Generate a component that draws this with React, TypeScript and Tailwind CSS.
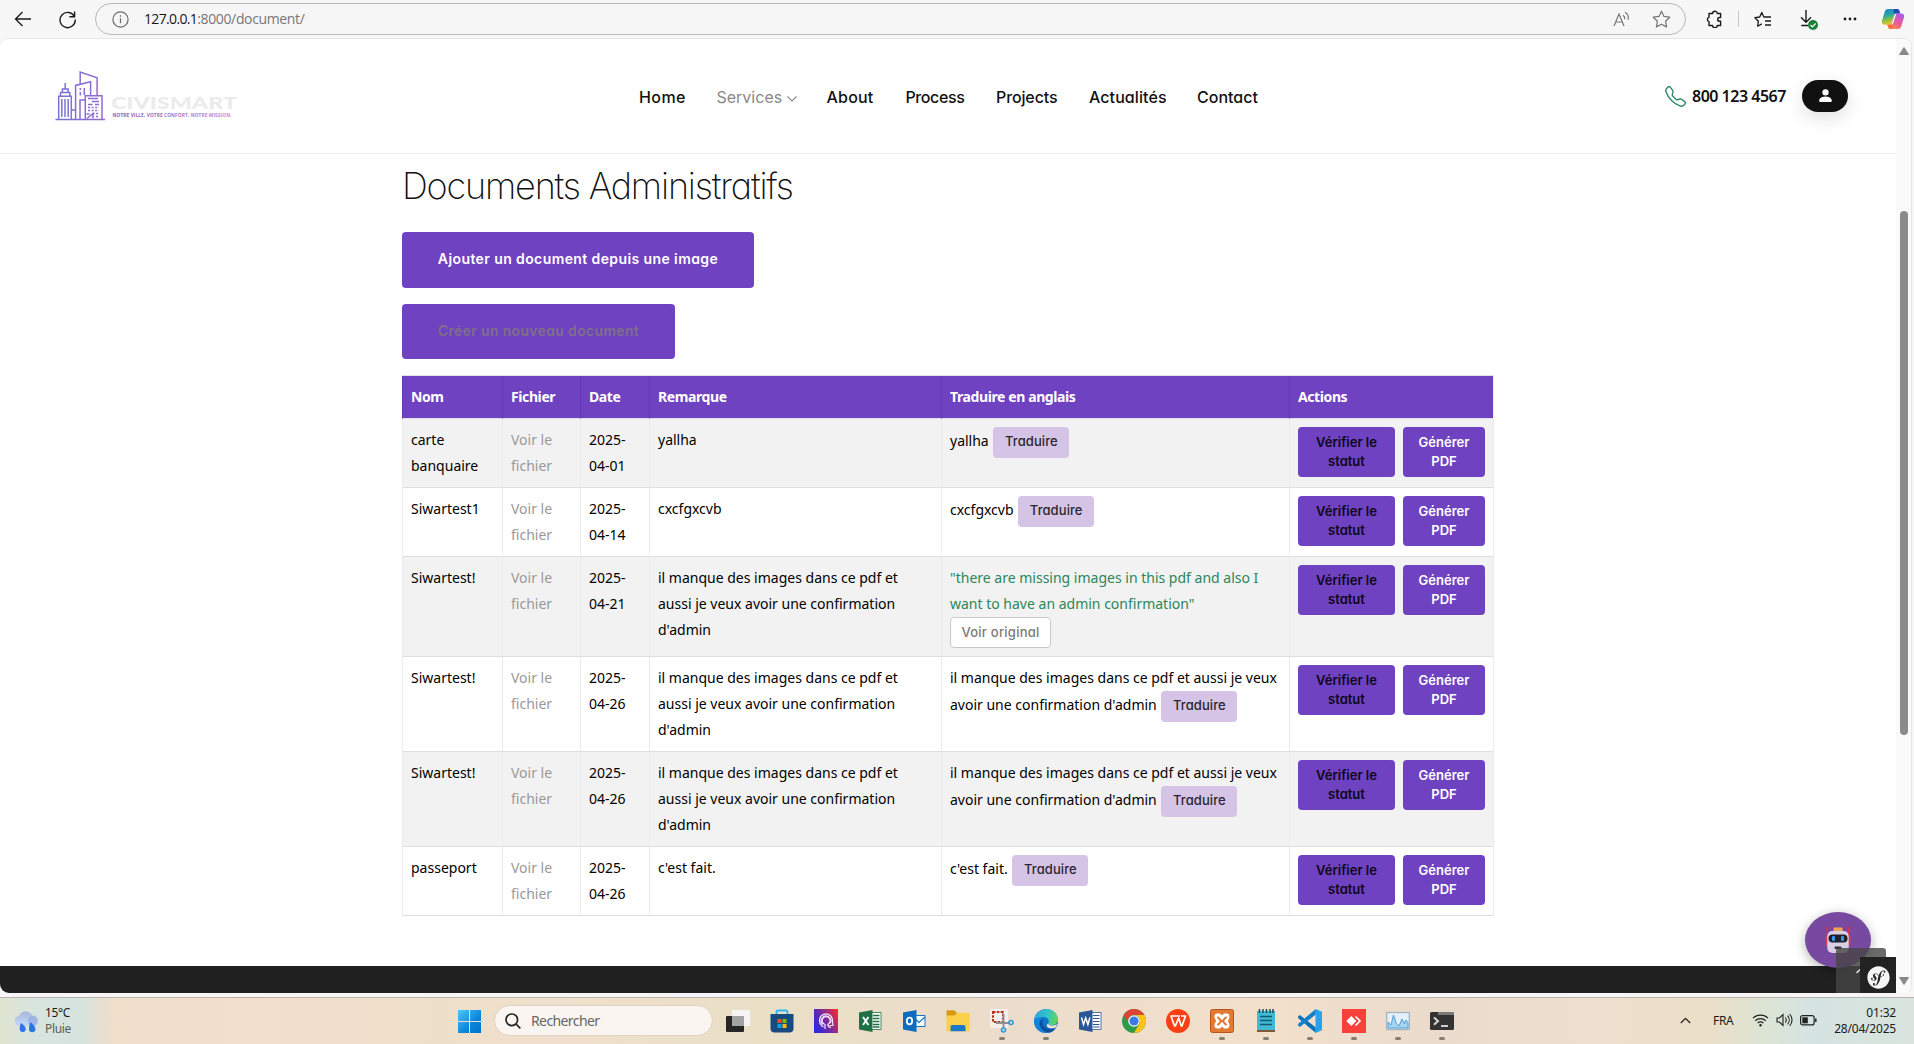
import React from "react";
import { BsPersonFill, BsTelephone } from "react-icons/bs";
import { FaSymfony } from "react-icons/fa";
import { SiXampp } from "react-icons/si";

/* ---------- browser toolbar ---------- */

function Copilot() {
  return (
    <svg width="24" height="22" viewBox="0 0 24 22">
      <defs>
        <linearGradient id="cpA" x1="0" y1="0" x2="0.3" y2="1">
          <stop offset="0" stopColor="#1b7fd8" />
          <stop offset=".45" stopColor="#2aa7a0" />
          <stop offset=".75" stopColor="#8fc23c" />
          <stop offset="1" stopColor="#f2c62a" />
        </linearGradient>
        <linearGradient id="cpB" x1="0.6" y1="0" x2="0.2" y2="1">
          <stop offset="0" stopColor="#b05ae0" />
          <stop offset=".5" stopColor="#e85a9c" />
          <stop offset="1" stopColor="#fb8a4e" />
        </linearGradient>
      </defs>
      <path d="M7 1h9c1.300 0 2 .7 2.400 2l.8 2.600h-3.600c-1.200 0-1.900.6-2.300 1.900L11 14.500c-.5 1.600-1.300 2.200-2.600 2.200H3.600C1.300 16.700.4 15 1 12.700L3.800 3.600C4.300 1.900 5.300 1 7 1z" fill="url(#cpA)" />
      <path d="M13 1h3c1.300 0 2 .7 2.400 2l.8 2.600h-3.600c-1 0-1.700.4-2.100 1.400L12.600 3c-.2-1 0-1.600.4-2z" fill="#2347b8" />
      <path d="M17 21H9.500c-1.300 0-2-.7-2.400-2l-.7-2.300h2c1.300 0 2.100-.6 2.600-2.200l2.300-7c.4-1.300 1.100-1.900 2.300-1.900h4.800c2.300 0 3.200 1.700 2.600 4l-2.800 8.800C19.700 20.100 18.700 21 17 21z" fill="url(#cpB)" />
      <path d="M6.400 16.700h2c1.300 0 2.100-.6 2.600-2.200L11.600 19c0 1.200-.6 2-1.600 2-1.500 0-2.400-.7-2.900-2z" fill="#f0703a" />
      <path d="M13.300 7.500c.4-1.200 1-1.800 2-1.900l-2.900 9.100c-.4 1.300-1.100 1.900-2.200 2 .4-.4.600-1.100.8-1.700z" fill="#fff" />
    </svg>
  );
}

function Toolbar() {
  return (
    <div className="flex h-[38px] shrink-0 items-center bg-[#f7f7f7]">
      <svg className="ml-[14px]" width="18" height="18" viewBox="0 0 18 18" fill="none" stroke="#1b1b1b" strokeWidth="1.300">
        <path d="M17 9H1.500M8.500 2L1.500 9l7 7" />
      </svg>
      <svg className="ml-[26px]" width="19" height="19" viewBox="0 0 19 19" fill="none" stroke="#1b1b1b" strokeWidth="1.400">
        <path d="M16.500 6.800A7.600 7.600 0 1 0 17.200 9.500M16.600 1.500v5.300h-5.200" />
      </svg>
      <div className="ml-[18px] flex h-[32px] w-[1591px] items-center rounded-full border border-[#b9b9b9] bg-[#f6f6f6] pl-[16px]">
        <svg width="17" height="17" viewBox="0 0 17 17" fill="none" stroke="#6b6b6b" strokeWidth="1.200">
          <circle cx="8.500" cy="8.500" r="7.600" />
          <path d="M8.500 7.300v5M8.500 4.300v1.400" />
        </svg>
        <span className="ml-[15px] pb-px font-['Open_Sans'] text-[14px] tracking-[-0.360px] text-[#767676]">
          <span className="tracking-[-0.650px] text-[#161616]">127.0.0.1</span>:8000/document/
        </span>
        <svg className="ml-auto" width="18" height="17" viewBox="0 0 18 17" fill="none" stroke="#767676" strokeWidth="1.200">
          <path d="M1 15L6 3l5 12M2.800 11h6.500M10 4.200c1.300.8 1.900 2.300 1.700 4M12 1.300c2.600 1.500 3.800 4.300 3.200 7.500" />
        </svg>
        <svg className="ml-[21px] mr-[14px]" width="19" height="18" viewBox="0 0 19 18" fill="none" stroke="#767676" strokeWidth="1.200" strokeLinejoin="round">
          <path d="M9.500 1.200l2.500 5.200 5.700.8-4.100 4 1 5.700-5.100-2.700-5.100 2.700 1-5.700-4.100-4 5.700-.8z" />
        </svg>
      </div>
      <svg className="ml-[20px]" width="18" height="18" viewBox="0 0 18 18" fill="none" stroke="#1b1b1b" strokeWidth="1.400" strokeLinejoin="round">
        <path d="M3 3.500h3.600a2.300 2.300 0 0 1 4.600 0h3.400v4h-1a1.900 1.900 0 0 0 0 3.800h1v4.200h-3.400a2.300 2.300 0 0 1-4.600 0H3v-3.800a2.300 2.300 0 0 1 0-4.400z" />
      </svg>
      <div className="ml-[14px] h-[16px] w-px bg-[#c4c4c4]" />
      <svg className="ml-[15px]" width="18" height="17" viewBox="0 0 18 17" fill="none" stroke="#1b1b1b" strokeWidth="1.300" strokeLinejoin="round">
        <path d="M10 6H9.800L7.800 1.500 5.700 6l-4.800.7 3.500 3.500-.8 5 4.200-2.300M9.500 6H17M11 10h6M11 14h6" />
      </svg>
      <div className="relative ml-[28px] h-[20px] w-[17px]">
        <svg width="14" height="18" viewBox="0 0 14 18" fill="none" stroke="#1b1b1b" strokeWidth="1.400">
          <path d="M6 1v12M1 8.200l5 5 5-5M1.300 16.500H8" />
        </svg>
        <svg className="absolute left-[8px] top-[11px]" width="10" height="10" viewBox="0 0 10 10">
          <circle cx="5" cy="5" r="5" fill="#1d8038" />
          <path d="M2.500 5l1.800 1.800L7.600 3.500" fill="none" stroke="#fff" strokeWidth="1.200" />
        </svg>
      </div>
      <svg className="ml-[26px]" width="14" height="4" viewBox="0 0 14 4" fill="#1b1b1b">
        <circle cx="2" cy="2" r="1.400" />
        <circle cx="7" cy="2" r="1.400" />
        <circle cx="12" cy="2" r="1.400" />
      </svg>
      <div className="ml-[24px]">
        <Copilot />
      </div>
    </div>
  );
}

/* ---------- site header ---------- */

function Logo() {
  return (
    <svg className="ml-[54px]" width="186" height="56" viewBox="54 68 186 56">
      <defs>
        <linearGradient id="lg" gradientUnits="userSpaceOnUse" x1="56" y1="0" x2="104" y2="0">
          <stop offset="0" stopColor="#7573d6" />
          <stop offset="1" stopColor="#9769d0" />
        </linearGradient>
        <linearGradient id="tg" gradientUnits="userSpaceOnUse" x1="112" y1="0" x2="232" y2="0">
          <stop offset="0" stopColor="#7f5fb4" />
          <stop offset="1" stopColor="#c58ad8" />
        </linearGradient>
      </defs>
      <g fill="none" stroke="url(#lg)" strokeWidth="1.500">
        <path d="M55.500 119.500h49.500" />
        <path d="M58.700 119V96.300h12.600V119M60.500 96v-3.500h9.300V96M62.400 92.300V89h5.700v3.300M65.200 89v-6M61.800 99v18M65 99v18M68.200 99v18" />
        <path d="M71.500 110h4M75.600 119V85.400l15-3.700V95.500" />
        <path d="M80.200 84V72l16.900 5.700V95.500" />
        <path d="M80.300 88v2M80.300 92v3.500M84.300 88v7M80 119v-19h5" />
        <path d="M85.300 119V95.700H102V119M88 98.500h10M92 101.500h7M88 104.500h4.500M95 104.500h4" />
        <path d="M88 107.500h11M88 110.500h11M92.500 113.500H99M96 116.500h3" strokeDasharray="2 1.600" />
        <path d="M87 118.500l6-5v5M86.500 114h3" />
      </g>
      <text x="111" y="109.200" textLength="126" lengthAdjust="spacingAndGlyphs" fontFamily="Lato" fontWeight="900" fontSize="17.600" fill="#ebebee">
        CIVISMART
      </text>
      <text x="112.500" y="117.400" textLength="119" lengthAdjust="spacing" fontFamily="Open Sans" fontWeight="700" fontSize="4.800" fill="url(#tg)">
        NOTRE VILLE, VOTRE CONFORT, NOTRE MISSION.
      </text>
    </svg>
  );
}

function SiteHeader() {
  return (
    <header className="flex h-[115px] shrink-0 items-center border-b border-[#efefef]">
      <Logo />
      <nav className="mt-[2px] ml-[399px] flex w-[1026px] text-[16px] leading-[24px] font-medium text-[#111] font-[Inter] [font-feature-settings:'cv11']">
        <a className="w-[77.500px] tracking-[0.400px]">Home</a>
        <a className="flex w-[110px] items-center font-normal text-[#888]">
          Services
          <svg className="ml-[5px] mt-[3px]" width="10" height="6" viewBox="0 0 10 6" fill="none" stroke="#888" strokeWidth="1.100">
            <path d="M.5.500L5 5 9.500.500" />
          </svg>
        </a>
        <a className="w-[79px] tracking-[0.200px]">About</a>
        <a className="w-[90.500px] tracking-[-0.400px]">Process</a>
        <a className="w-[93px] tracking-[-0.120px]">Projects</a>
        <a className="w-[108px] tracking-[0.080px]">Actualités</a>
        <a>Contact</a>
      </nav>
      <BsTelephone className="size-[21px] text-[#2e8b63]" />
      <span className="ml-[6px] w-[110px] font-['Noto_Sans'] text-[16px] font-semibold tracking-[-0.500px] text-[#111]">800 123 4567</span>
      <button className="flex h-[32px] w-[46px] items-center justify-center rounded-full bg-[#111] shadow-[0_6px_18px_rgba(0,0,0,0.12)]">
        <BsPersonFill className="mb-[2px] size-[17px] text-white" />
      </button>
    </header>
  );
}

/* ---------- documents table ---------- */

type Doc = { nom: string; date: string; remarque: string; traduction?: string };

const admin = "il manque des images dans ce pdf et aussi je veux avoir une confirmation d'admin";

const docs: Doc[] = [
  { nom: "carte banquaire", date: "2025-04-01", remarque: "yallha" },
  { nom: "Siwartest1", date: "2025-04-14", remarque: "cxcfgxcvb" },
  {
    nom: "Siwartest!",
    date: "2025-04-21",
    remarque: admin,
    traduction: '"there are missing images in this pdf and also I want to have an admin confirmation"',
  },
  { nom: "Siwartest!", date: "2025-04-26", remarque: admin },
  { nom: "Siwartest!", date: "2025-04-26", remarque: admin },
  { nom: "passeport", date: "2025-04-26", remarque: "c'est fait." },
];

const columns = ["Nom", "Fichier", "Date", "Remarque", "Traduire en anglais", "Actions"];

function Cell({ children }: { children: React.ReactNode }) {
  return <td className="border-b border-l border-b-[#dedede] border-l-[#ececec] p-2 align-top">{children}</td>;
}

function DocumentsTable() {
  return (
    <table className="mt-[16px] w-[1092px] table-fixed border-separate border-spacing-0 border-t border-r border-t-[#e3e0ea] border-r-[#ececec] font-['Noto_Sans'] text-[14px] leading-[26px] text-black">
      <colgroup>
        <col className="w-[100px]" />
        <col className="w-[78px]" />
        <col className="w-[69px]" />
        <col className="w-[292px]" />
        <col className="w-[348px]" />
        <col className="w-[204px]" />
      </colgroup>
      <thead>
        <tr>
          {columns.map((c) => (
            <th key={c} className="h-[43px] border-b border-l border-b-[#e3e0ea] border-l-[#6438b2] bg-[#6f42c1] px-2 text-left font-bold tracking-[-0.400px] text-white">
              {c}
            </th>
          ))}
        </tr>
      </thead>
      <tbody>
        {docs.map((d, i) => (
          <tr key={i} className="odd:bg-[#f2f2f2]">
            <Cell>{d.nom}</Cell>
            <Cell>
              <a className="text-[#999]">Voir le fichier</a>
            </Cell>
            <Cell>{d.date}</Cell>
            <Cell>{d.remarque}</Cell>
            <Cell>
              {d.traduction ? (
                <>
                  <div className="text-[#2b8659]">{d.traduction}</div>
                  <button className="block h-[31px] w-[101px] rounded-[4px] border border-[#c9c9c9] bg-white text-[13px] leading-[29px] font-medium tracking-[0.250px] text-[#7b7b7b] font-[Inter] [font-feature-settings:'cv11']">
                    Voir original
                  </button>
                </>
              ) : (
                <>
                  {d.remarque}{" "}
                  <button className="ml-px inline-block h-[31px] w-[76px] rounded-[4px] bg-[#d6c4e6] pb-[2px] align-baseline text-[13px] leading-[29px] font-medium tracking-[0.080px] text-[#2a2530] font-[Inter] [font-feature-settings:'cv11']">
                    Traduire
                  </button>
                </>
              )}
            </Cell>
            <Cell>
              <div className="flex gap-2 text-[13px] leading-[19px] font-semibold font-[Inter] [font-feature-settings:'cv11']">
                <button className="h-[50px] w-[97px] rounded-[4px] bg-[#6f42c1] px-3 text-[#0d0718]">Vérifier le statut</button>
                <button className="h-[50px] w-[82px] rounded-[4px] bg-[#6f42c1] px-3 text-white">Générer PDF</button>
              </div>
            </Cell>
          </tr>
        ))}
      </tbody>
    </table>
  );
}

/* ---------- floating widgets ---------- */

function Robot() {
  return (
    <svg width="28" height="28" viewBox="0 0 28 28">
      <path d="M3.300 1v10M24.700 1v10" stroke="#d8304c" strokeWidth="1.400" />
      <circle cx="3.300" cy="2" r="1.500" fill="#d8304c" />
      <circle cx="24.700" cy="2" r="1.500" fill="#d8304c" />
      <rect x="1.600" y="10" width="3" height="10" rx="1.500" fill="#dd3a55" />
      <rect x="23.400" y="10" width="3" height="10" rx="1.500" fill="#dd3a55" />
      <rect x="9.500" y="1.500" width="9" height="5" rx="1" fill="#f4a351" />
      <rect x="3.300" y="5" width="21.400" height="22" rx="5" fill="#d9cfe2" />
      <rect x="4.500" y="8.500" width="19" height="8" rx="4" fill="#241f29" />
      <rect x="8" y="10" width="3" height="5" rx="1" fill="#2b9be6" />
      <rect x="17" y="10" width="3" height="5" rx="1" fill="#2b9be6" />
      <rect x="10.500" y="20.500" width="7" height="2.500" rx="1" fill="#35303b" />
    </svg>
  );
}

function Widgets() {
  return (
    <>
      <div className="absolute right-[25px] bottom-[25px] flex h-[56px] w-[66px] items-center justify-center rounded-[50%] bg-[#7749a0] shadow-[0_3px_12px_rgba(0,0,0,0.3)]">
        <Robot />
      </div>
      <div className="absolute right-[10px] bottom-0 h-[45px] w-[50px] rounded-t-[3px] bg-[#464646]/80">
        <svg className="absolute left-[20px] top-[19px]" width="20" height="8" viewBox="0 0 20 8" fill="none" stroke="#d8d8d8" strokeWidth="1.600">
          <path d="M.5 6L6 1l5.500 5" />
        </svg>
      </div>
      <div className="absolute right-0 bottom-0 flex h-[36px] w-[36px] items-center justify-center bg-[#222]">
        <FaSymfony className="mt-[4px] size-[23px] text-[#f5f5f5]" />
      </div>
    </>
  );
}

/* ---------- taskbar ---------- */

type AppIcon = { id: string; running?: boolean; art: React.ReactNode };

const apps: AppIcon[] = [
  {
    id: "task-view",
    art: (
      <>
        <rect x="0" y="7" width="18" height="16" rx="1" fill="#262626" />
        <rect x="6" y="1" width="18" height="16" rx="1" fill="#f4f4f4" />
        <path d="M6 7h12v10H6z" fill="#a3a3a3" />
      </>
    ),
  },
  {
    id: "store",
    art: (
      <>
        <path d="M6.500 6V3.200C6.500 2.200 7 1.500 8.200 1.500h7.600c1.200 0 1.700.7 1.700 1.700V6" fill="none" stroke="#2fb3ee" strokeWidth="1.800" />
        <path d="M.5 5h23v14.500c0 2.500-1.500 4-4 4h-15c-2.500 0-4-1.500-4-4z" fill="#184a80" />
        <path d="M7.500 10h4v4h-4z" fill="#f25022" />
        <path d="M12.500 10h4v4h-4z" fill="#7fba00" />
        <path d="M7.500 15h4v4h-4z" fill="#00a4ef" />
        <path d="M12.500 15h4v4h-4z" fill="#ffb900" />
      </>
    ),
  },
  {
    id: "assistant",
    art: (
      <>
        <defs>
          <linearGradient id="pt" x1="0" y1="0.700" x2="1" y2="0.200">
            <stop offset="0" stopColor="#2c2ae0" />
            <stop offset=".5" stopColor="#7a2a9c" />
            <stop offset="1" stopColor="#f02a36" />
          </linearGradient>
        </defs>
        <path d="M0 0h24v24H0z" fill="url(#pt)" />
        <g fill="none" stroke="#f3e6fa" strokeWidth="1.200">
          <path d="M9.500 18C6.500 16.500 5.500 14 5.500 11.300a6.500 6.500 0 0 1 13 0c0 2 .3 3.200.5 5.200h-3.500" />
          <path d="M11 20v-4.500a4 4 0 1 1 2.800-.2c0 2 1 3 3.200 3.200" />
          <path d="M8.800 15.500a4.800 4.800 0 1 1 7.600-1.500" />
        </g>
      </>
    ),
  },
  {
    id: "excel",
    art: (
      <>
        <rect x="13" y="3.500" width="10" height="17" fill="#fff" stroke="#1f7145" strokeWidth=".8" />
        <path d="M15 6.500h6.500M15 9.500h6.500M15 12.500h6.500M15 15.500h6.500M15 18h6.500" stroke="#1f7145" strokeWidth="1.300" />
        <path d="M1 3.500L14.500 1v22L1 20.500z" fill="#1f7145" />
        <path d="M5 8l5.500 8M10.500 8L5 16" stroke="#fff" strokeWidth="1.900" />
      </>
    ),
  },
  {
    id: "outlook",
    art: (
      <>
        <path d="M13 6.500h10v11H13z" fill="#fff" stroke="#1373c4" strokeWidth="1" />
        <path d="M13 10l4 3.500L23 8" fill="none" stroke="#1373c4" strokeWidth="1.300" />
        <path d="M1 3.500L14.500 1v22L1 20.500z" fill="#0c6cbf" />
        <ellipse cx="7.500" cy="12" rx="2.700" ry="3.300" fill="none" stroke="#fff" strokeWidth="1.800" />
      </>
    ),
  },
  {
    id: "explorer",
    art: (
      <>
        <path d="M.5 2.500C.5 1.700 1 1.200 1.800 1.200h6.500l3 3V9H.5z" fill="#d99a12" />
        <path d="M.5 6.500h8l2.800-2.800h11c.8 0 1.300.5 1.300 1.300v16c0 .8-.5 1.300-1.300 1.300H1.800c-.8 0-1.300-.5-1.300-1.300z" fill="#fcd04a" />
        <path d="M4.500 22.300V18c0-1.200.7-2 2-2h11c1.300 0 2 .8 2 2v4.300z" fill="#1a78c8" />
      </>
    ),
  },
  {
    id: "snipping",
    running: true,
    art: (
      <>
        <rect x="0" y="0" width="18" height="19" rx="1.500" fill="#f4efec" />
        <rect x="3" y="3" width="10" height="10" fill="none" stroke="#b5331b" strokeWidth="2" strokeDasharray="2.600 1.200" />
        <path d="M13.500 5v14M6 14h14" stroke="#8f8f93" strokeWidth="1.900" />
        <circle cx="21" cy="13.500" r="2" fill="none" stroke="#2b9bd8" strokeWidth="1.600" />
        <circle cx="13.500" cy="21" r="2" fill="none" stroke="#2b9bd8" strokeWidth="1.600" />
      </>
    ),
  },
  {
    id: "edge",
    running: true,
    art: (
      <>
        <defs>
          <linearGradient id="eg" x1="0" y1="0.200" x2="1" y2="0.400">
            <stop offset="0" stopColor="#2ba4e2" />
            <stop offset=".6" stopColor="#35c5c0" />
            <stop offset="1" stopColor="#61d659" />
          </linearGradient>
        </defs>
        <circle cx="12" cy="12" r="12" fill="#1074cc" />
        <path d="M.1 11C1 4.500 6 0 12.300 0 19 0 24 4.700 24 10.200c0 3.600-2.800 6-6 6-2.700 0-4-1-3.600-2 1.200-2.600-.4-6.200-4.400-6.200C5 8 1.500 10 .1 11z" fill="url(#eg)" />
        <path d="M9.500 8.200C6 10 4.500 13.300 6 17c1.500 3.800 5.500 6.500 9.500 6.500C11 24.800 3 23.500.5 15.500-.5 11 4.500 7.500 9.500 8.200z" fill="#1583dc" />
        <path d="M9.800 9.500c-2.300 2.500-1.600 6.500 1 8.800 3 2.500 7.300 2.500 10.900.7-1.500 2.800-4 4.300-6.700 4.600-4 0-8-3-9.200-7-.8-3.300 1-6 4-7.100z" fill="#0b4f9e" />
        <path d="M14.400 14.200c-.4 1 .9 2.300 3.800 2.300 2 0 3.900-.8 4.800-1.800-.3 2-.9 3.300-1.600 4-2.600 1-6.200 1-8-.8-1.200-1.300-.5-2.600 1-3.700z" fill="#ebddd0" />
      </>
    ),
  },
  {
    id: "word",
    art: (
      <>
        <rect x="13" y="3.500" width="10" height="17" fill="#fff" stroke="#2b5698" strokeWidth=".8" />
        <path d="M15 6.500h6.500M15 9.500h6.500M15 12.500h6.500M15 15.500h6.500M15 18h6.500" stroke="#2b5698" strokeWidth="1.200" />
        <path d="M1 3.500L14.500 1v22L1 20.500z" fill="#2b5698" />
        <path d="M3.500 8.500l2 7 2.200-6.500L9.900 15.500l2-7" fill="none" stroke="#fff" strokeWidth="1.500" />
      </>
    ),
  },
  {
    id: "chrome",
    art: (
      <>
        <circle cx="12" cy="12" r="12" fill="#2e9b48" />
        <path d="M1.600 6A12 12 0 0 1 22.400 6H12a6 6 0 0 0-5.200 9z" fill="#dd4434" />
        <path d="M22.400 6A12 12 0 0 1 12 24l5.200-9A6 6 0 0 0 12 6z" fill="#fbc21a" />
        <circle cx="12" cy="12" r="5.800" fill="#fff" />
        <circle cx="12" cy="12" r="4.600" fill="#3b79e6" />
      </>
    ),
  },
  {
    id: "wps",
    art: (
      <>
        <circle cx="12" cy="12" r="12" fill="#fb3f12" />
        <path d="M4.500 7h9.500M5 7l3.500 10h.8L12.600 9l2.700 8h.6L19.500 7h-4.500" fill="none" stroke="#fff" strokeWidth="1.700" strokeLinejoin="round" />
      </>
    ),
  },
  {
    id: "xampp",
    running: true,
    art: (
      <>
        <rect x=".5" y=".5" width="23" height="23" rx="2" fill="#e37a33" stroke="#b9531a" />
        <path
          d="M7.500 4.500h2.300L12 6.300l2.200-1.800h2.300c2 0 3 1.200 3 3 0 1.700-.7 2.700-1.700 4.500 1 1.800 1.700 2.800 1.700 4.500 0 1.800-1 3-3 3h-2.300L12 17.700l-2.200 1.800H7.500c-2 0-3-1.200-3-3 0-1.700.7-2.700 1.700-4.500-1-1.800-1.700-2.800-1.700-4.500 0-1.800 1-3 3-3z"
          fill="#fff"
        />
        <path d="M8 8.500c1.500 0 1.700 3.500 4 3.500s2.500-3.500 4-3.500M8 15.500c1.500 0 1.700-3.500 4-3.500s2.500 3.500 4 3.500" fill="none" stroke="#e0742c" strokeWidth="2" strokeLinecap="round" />
      </>
    ),
  },
  {
    id: "notepad",
    running: true,
    art: (
      <>
        <path d="M3 2h18v19H3z" fill="#41b9d3" />
        <path d="M3 21h18v2H3z" fill="#7d5a35" />
        <path d="M5.500 0v4M9 0v4M12.500 0v4M16 0v4M19 0v4" stroke="#1d4a57" strokeWidth="1.500" />
        <path d="M6 7.500h12M6 11.500h12M6 15.500h12" stroke="#0f5c70" strokeWidth="1.500" />
      </>
    ),
  },
  {
    id: "vscode",
    running: true,
    art: (
      <>
        <path d="M0 7.500L1.800 6l16 12.500V24L.3 9.200z" fill="#0a72b8" />
        <path d="M0 16.500L1.800 18l16-12.500V0L.3 14.800z" fill="#1180cb" />
        <path d="M17.500 0L24 2.800v18.400L17.500 24z" fill="#28a1ee" />
      </>
    ),
  },
  {
    id: "anydesk",
    running: true,
    art: (
      <>
        <path d="M0 0h24v24H0z" fill="#f8413a" />
        <path d="M9.300 7l5 5-5 5-5-5z" fill="#fff" />
        <path d="M13.500 7.500l4.500 4.500-4.500 4.500" fill="none" stroke="#fff" strokeWidth="1.700" />
      </>
    ),
  },
  {
    id: "perfmon",
    running: true,
    art: (
      <>
        <rect x=".7" y="3.500" width="22.600" height="17" fill="#e4f1fa" stroke="#a7b4bd" strokeWidth="1.300" />
        <path d="M2 19v-6l3 3 2.500-10 3 9 2.500 2 3-7 2.500 5 1.500-4 2 3v5z" fill="#a8d5f2" stroke="#4f9fd8" strokeWidth="1" />
      </>
    ),
  },
  {
    id: "terminal",
    running: true,
    art: (
      <>
        <rect x="0" y="3" width="24" height="18" rx="1.500" fill="#333" />
        <path d="M8 3h14.500c.8 0 1.500.7 1.500 1.500V6H8z" fill="#7a7a7a" />
        <path d="M4 8.500l4 3.500-4 3.800" fill="none" stroke="#d7d7d7" strokeWidth="2" />
        <path d="M11 17h7" stroke="#fff" strokeWidth="1.500" />
      </>
    ),
  },
];

function Taskbar() {
  return (
    <div className="flex h-[47px] shrink-0 border-t border-[#b9b3ad] bg-[linear-gradient(90deg,#e0e5d3_0px,#d8e4de_35px,#d6e3df_80px,#efdfcb_112px,#f2dfcd_250px,#eedfca_440px,#f0dfcc_560px,#eae0c6_760px,#ecdccb_1000px,#f2e0cb_1270px,#ebdbcc_1430px,#efdfcf_1600px,#ebdfc8_1710px,#dce4d4_1765px,#d5e3e1_1810px,#d8e4dc_1914px)] font-['Noto_Sans'] text-[12px] leading-[16px] text-[#1b1b1b]">
      <div className="flex w-[458px] pt-[7px]">
        <svg className="mt-[6px] ml-[14px]" width="25" height="23" viewBox="0 0 25 23">
          <defs>
            <linearGradient id="cl" x1="0" y1="0" x2="0" y2="1">
              <stop offset="0" stopColor="#a9b8dd" />
              <stop offset="1" stopColor="#c5d8fa" />
            </linearGradient>
          </defs>
          <path d="M5.500 15a5 5 0 0 1-.7-9.900A7.500 7.500 0 0 1 18.500 5a5.200 5.200 0 0 1 .8 10z" fill="url(#cl)" />
          <circle cx="19" cy="9.800" r="5.200" fill="#8da6e0" opacity=".6" />
          <path d="M7 12c3 2 4.700 4 4.700 6a3 3 0 0 1-6 0c0-2 .3-4 1.300-6zM16.500 11c3 2.500 5 5 5 7.500a3.300 3.300 0 0 1-6.500 0c0-2.500.4-5 1.500-7.500z" fill="#2a74e8" />
        </svg>
        <div className="ml-[6px] tracking-[-0.350px]">
          <div>15°C</div>
          <div className="text-[#5c5c58]">Pluie</div>
        </div>
      </div>
      <svg className="mt-[12px]" width="23" height="23" viewBox="0 0 23 23">
        <defs>
          <linearGradient id="win" gradientUnits="userSpaceOnUse" x1="0" y1="0" x2="23" y2="23">
            <stop offset="0" stopColor="#4cc8f6" />
            <stop offset=".6" stopColor="#0b86dc" />
            <stop offset="1" stopColor="#0570c8" />
          </linearGradient>
        </defs>
        <path d="M0 0h11v11H0zM12 0h11v11H12zM0 12h11v11H0zM12 12h11v11H12z" fill="url(#win)" />
      </svg>
      <div className="mt-[7px] ml-[13px] flex h-[31px] w-[219px] items-center rounded-full border border-[#ddd2c4] bg-[#faf5f0]">
        <svg className="ml-[10px]" width="16" height="16" viewBox="0 0 16 16" fill="none" stroke="#222" strokeWidth="1.700">
          <circle cx="6.800" cy="6.800" r="5.800" />
          <path d="M11 11l4.300 4.300" />
        </svg>
        <span className="ml-[10px] text-[14px] tracking-[-0.600px] text-[#666]">Rechercher</span>
      </div>
      <div className="mt-[11px] ml-[13px] flex gap-[20px]">
        {apps.map((a) => (
          <div key={a.id} className="flex w-[24px] flex-col items-center">
            <svg width="24" height="24" viewBox="0 0 24 24">
              {a.art}
            </svg>
            {a.running && <div className="mt-[4px] h-[3px] w-[6px] rounded-full bg-[#867d75]" />}
          </div>
        ))}
      </div>
      <div className="mr-[18px] ml-auto flex">
        <svg className="mt-[19px]" width="11" height="7" viewBox="0 0 11 7" fill="none" stroke="#222" strokeWidth="1.300">
          <path d="M.8 6l4.700-4.700L10.200 6" />
        </svg>
        <span className="mt-[15px] ml-[22px] w-[21px] tracking-[-0.300px]">FRA</span>
        <svg className="mt-[15px] ml-[18px]" width="17" height="14" viewBox="0 0 17 14" fill="none" stroke="#222" strokeWidth="1.200">
          <path d="M1 5.200a10.600 10.600 0 0 1 15 0M3.300 7.700a7.400 7.400 0 0 1 10.400 0M5.600 10.100a4.100 4.100 0 0 1 5.800 0" />
          <circle cx="8.500" cy="12.200" r="1.200" fill="#222" stroke="none" />
        </svg>
        <svg className="mt-[15px] ml-[7px]" width="17" height="14" viewBox="0 0 17 14" fill="none" stroke="#222" strokeWidth="1.100">
          <path d="M1 5h2.500L7 1.500v11L3.500 9H1zM9.300 4.500c1.200 1.500 1.200 3.500 0 5M11.500 2.700c2.300 2.500 2.300 6.100 0 8.600M13.600 1c3.200 3.500 3.200 8.500 0 12" />
        </svg>
        <svg className="mt-[17px] ml-[7px]" width="17" height="11" viewBox="0 0 17 11" fill="none" stroke="#222" strokeWidth="1.200">
          <rect x=".6" y=".6" width="13.500" height="9.300" rx="2" />
          <rect x="2.300" y="2.300" width="5.500" height="6" fill="#222" stroke="none" />
          <path d="M15.800 3.500v3.500" strokeWidth="1.500" />
        </svg>
        <div className="mt-[7px] w-[79px] text-right tracking-[-0.200px]">
          <div>01:32</div>
          <div>28/04/2025</div>
        </div>
      </div>
    </div>
  );
}

/* ---------- page ---------- */

export default function App() {
  return (
    <div className="flex h-[1044px] w-[1914px] flex-col overflow-hidden bg-[#f7f5f6]">
      <Toolbar />
      <div className="flex h-[955px] w-[1912px] shrink-0 overflow-hidden rounded-[9px] border-t border-r border-[#e6e6e6] bg-white">
        <div className="relative flex w-[1896px] shrink-0 flex-col">
          <SiteHeader />
          <main className="ml-[402px] flex flex-1 flex-col items-start pt-[10px]">
            <h1 className="text-[36px] leading-[44px] font-extralight tracking-[-1.180px] text-[#111] font-[Inter] [font-feature-settings:'cv11']">
              Documents Administratifs
            </h1>
            <button className="mt-[24px] h-[56px] w-[352px] rounded-[4px] bg-[#6f42c1] pb-[3px] text-[14px] font-semibold tracking-[0.400px] text-white font-[Inter] [font-feature-settings:'cv11']">
              Ajouter un document depuis une image
            </button>
            <button className="mt-[16px] h-[55px] w-[273px] rounded-[4px] bg-[#6f42c1] pb-[2px] text-[14px] font-semibold tracking-[0.330px] text-[#7d7088] font-[Inter] [font-feature-settings:'cv11']">
              Créer un nouveau document
            </button>
            <DocumentsTable />
          </main>
          <div className="h-[27px] shrink-0 bg-[#202020]" />
          <Widgets />
        </div>
        <div className="flex w-[15px] flex-col items-center bg-[#fafafa] pt-[8px] pb-[8px]">
          <svg width="10" height="8" viewBox="0 0 10 8" fill="#8a8a8a">
            <path d="M5 0.500L9.500 7.500h-9z" stroke="#8a8a8a" strokeLinejoin="round" />
          </svg>
          <div className="mt-[156px] h-[524px] w-[8px] rounded-full bg-[#8b8b8b]" />
          <svg className="mt-auto" width="10" height="8" viewBox="0 0 10 8" fill="#8a8a8a">
            <path d="M5 7.500L.5.500h9z" stroke="#8a8a8a" strokeLinejoin="round" />
          </svg>
        </div>
      </div>
      <div className="h-[4px] shrink-0 bg-[#f7f5f6]" />
      <Taskbar />
    </div>
  );
}
